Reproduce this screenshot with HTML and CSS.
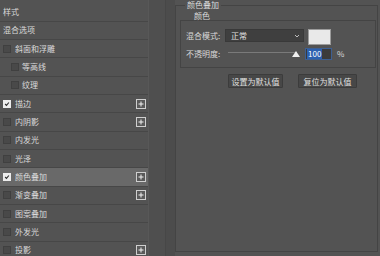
FILE: index.html
```html
<!DOCTYPE html>
<html lang="zh-CN">
<head>
    <meta charset="UTF-8">
    <title>图层样式</title>
    <link rel="stylesheet" href="styles.css">
</head>
<body>
    <div class="dialog">
        <ul class="styles-list">
            <li class="item">样式</li>
            <li class="item">混合选项</li>
            <li class="item"><span class="check"></span>斜面和浮雕</li>
            <li class="item sub"><span class="check"></span>等高线</li>
            <li class="item sub"><span class="check"></span>纹理</li>
            <li class="item"><span class="check on"><svg viewBox="0 0 8 8"><path d="M1.5 4l1.8 1.8L6.5 2"/></svg></span>描边<span class="add"><svg viewBox="0 0 10 10"><rect x="0.5" y="0.5" width="9" height="9"/><path d="M5 2.5v5M2.5 5h5"/></svg></span></li>
            <li class="item"><span class="check"></span>内阴影<span class="add"><svg viewBox="0 0 10 10"><rect x="0.5" y="0.5" width="9" height="9"/><path d="M5 2.5v5M2.5 5h5"/></svg></span></li>
            <li class="item"><span class="check"></span>内发光</li>
            <li class="item"><span class="check"></span>光泽</li>
            <li class="item active"><span class="check on"><svg viewBox="0 0 8 8"><path d="M1.5 4l1.8 1.8L6.5 2"/></svg></span>颜色叠加<span class="add"><svg viewBox="0 0 10 10"><rect x="0.5" y="0.5" width="9" height="9"/><path d="M5 2.5v5M2.5 5h5"/></svg></span></li>
            <li class="item"><span class="check"></span>渐变叠加<span class="add"><svg viewBox="0 0 10 10"><rect x="0.5" y="0.5" width="9" height="9"/><path d="M5 2.5v5M2.5 5h5"/></svg></span></li>
            <li class="item"><span class="check"></span>图案叠加</li>
            <li class="item"><span class="check"></span>外发光</li>
            <li class="item"><span class="check"></span>投影<span class="add"><svg viewBox="0 0 10 10"><rect x="0.5" y="0.5" width="9" height="9"/><path d="M5 2.5v5M2.5 5h5"/></svg></span></li>
        </ul>
        <div class="gutter"></div>
        <div class="panel">
            <fieldset class="effect">
                <legend>颜色叠加</legend>
                <div class="group-title">颜色</div>
                <div class="group">
                    <div class="field first">
                        <label>混合模式:</label>
                        <div class="select">正常<svg viewBox="0 0 6 4"><path d="M1 1l2 2 2-2"/></svg></div>
                        <div class="swatch"></div>
                    </div>
                    <div class="field second">
                        <label>不透明度:</label>
                        <div class="slider"><span class="thumb"></span></div>
                        <div class="number"><span class="sel">100</span></div>
                        <span class="unit">%</span>
                    </div>
                </div>
                <div class="buttons">
                    <button class="btn-set">设置为默认值</button>
                    <button class="btn-reset">复位为默认值</button>
                </div>
            </fieldset>
        </div>
    </div>
</body>
</html>
```

FILE: styles.css
```css
body {
    margin: 0;
    background-color: #535353;
    font-family: "Noto Sans CJK SC", "Noto Sans", sans-serif;
    font-size: 8px;
    color: #dadada;
}
.dialog {
    display: flex;
    width: 380px;
    height: 256px;
    overflow: hidden;
}
.styles-list {
    list-style: none;
    margin: 0;
    padding: 3.5px 0 0;
    width: 148px;
    flex: none;
}
.item {
    display: flex;
    align-items: center;
    height: 18.33px;
    box-sizing: border-box;
    padding-left: 3px;
    border-bottom: 1px solid #474747;
    line-height: 10px;
}
.item.active {
    background-color: #696969;
}
.check {
    width: 8px;
    height: 8px;
    box-sizing: border-box;
    flex: none;
    margin-right: 4px;
    background-color: #494949;
    border: 1px solid #404040;
}
.check svg {
    display: block;
    width: 6px;
    height: 6px;
    fill: none;
    stroke: #2e2e2e;
    stroke-width: 1.5;
}
.check.on {
    background-color: #ececec;
    border-color: #ececec;
}
.sub {
    padding-left: 11px;
}
.sub .check {
    margin-right: 3px;
}
.add {
    margin-left: auto;
    margin-right: 2px;
    width: 10px;
    height: 10px;
}
.add svg {
    display: block;
    width: 10px;
    height: 10px;
}
.add rect {
    fill: #5a5a5a;
    stroke: #cfcfcf;
}
.add path {
    stroke: #f2f2f2;
}
.gutter {
    width: 27px;
    flex: none;
    background: linear-gradient(to right, #585858 0 1px, #4f4f4f 1px 17px, #474747 17px 18px, #4c4c4c 18px);
}
.panel {
    width: 203px;
    flex: none;
}
.effect {
    margin: 0;
    padding: 0 0 0 4px;
    min-width: 0;
    height: 252px;
    box-sizing: border-box;
    border: 1px solid #444;
}
.effect legend {
    margin-left: 5px;
    padding: 0 2px;
    line-height: 10px;
}
.group-title {
    padding: 1px 0 0 14px;
    line-height: 9px;
}
.group {
    margin-right: 1px;
    padding: 8px 0 7px 5px;
    border: 1px solid #444;
}
.field {
    display: flex;
}
.field label {
    width: 39px;
    flex: none;
}
.first {
    align-items: flex-start;
    line-height: 13px;
}
.second {
    margin-top: 3px;
    height: 12px;
    align-items: center;
    line-height: 12px;
}
.select {
    display: flex;
    align-items: center;
    justify-content: space-between;
    width: 79px;
    height: 13px;
    box-sizing: border-box;
    padding: 0 3px 0 5px;
    background-color: #3f3f3f;
    border: 1px solid #393939;
    color: #e2e2e2;
}
.select svg {
    width: 6px;
    height: 4px;
    fill: none;
    stroke: #bdbdbd;
}
.swatch {
    margin-left: 4px;
    width: 23px;
    height: 16px;
    box-sizing: border-box;
    background-color: #e9e9e9;
    border: 1px solid #9c9c9c;
}
.slider {
    position: relative;
    margin-left: 3px;
    width: 72px;
    height: 12px;
}
.slider::before {
    content: "";
    position: absolute;
    left: 0;
    right: 4px;
    top: 4px;
    height: 1px;
    background-color: #7a7a7a;
}
.thumb {
    position: absolute;
    right: 0;
    top: 3px;
    width: 0;
    height: 0;
    border-left: 4px solid transparent;
    border-right: 4px solid transparent;
    border-bottom: 6px solid #f0f0f0;
}
.number {
    margin-left: 5px;
    width: 27px;
    height: 12px;
    box-sizing: border-box;
    padding-left: 1px;
    background-color: #3b3b3b;
    border: 1px solid #3d5f92;
    line-height: 10px;
}
.sel {
    display: inline-block;
    padding: 0 1px;
    background-color: #2c60b0;
    color: #fff;
}
.unit {
    margin-left: 5px;
}
.buttons {
    display: flex;
    gap: 15px;
    margin: 6px 0 0 48px;
}
button {
    height: 14px;
    padding: 0;
    font: inherit;
    color: #e0e0e0;
    background-color: #474747;
    border: 1px solid #3c3c3c;
    border-radius: 1px;
}
.btn-set {
    width: 55px;
}
.btn-reset {
    width: 59px;
}
```
